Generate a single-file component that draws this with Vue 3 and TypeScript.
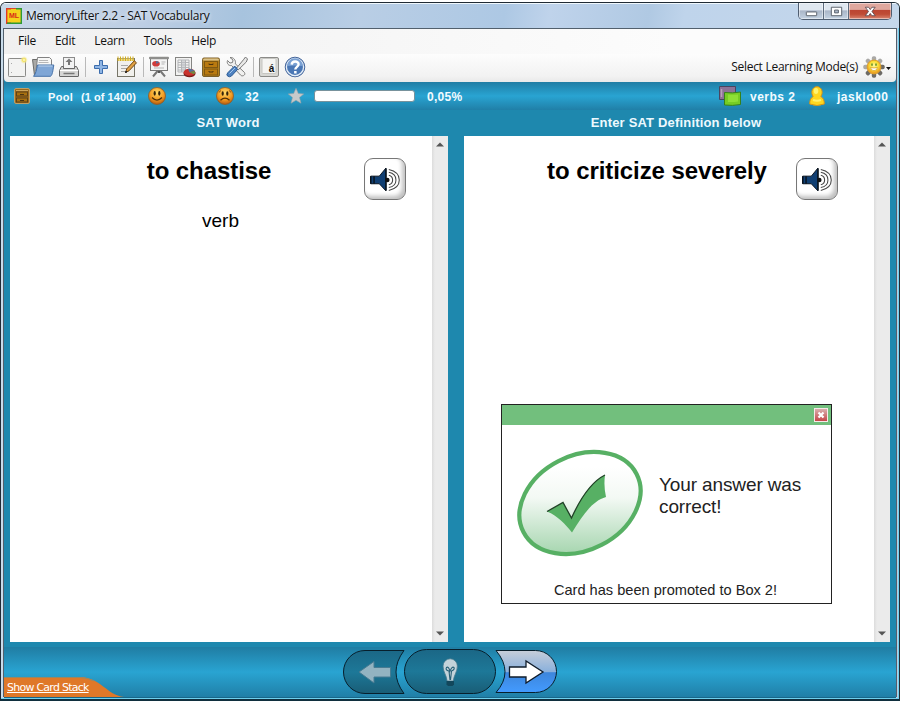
<script setup lang="ts">
interface Pane {
  id: string
  heading: string
  word: string
  kind: string
}

const menus: string[] = ['File', 'Edit', 'Learn', 'Tools', 'Help']

const panes: Pane[] = [
  { id: 'question', heading: 'SAT Word', word: 'to chastise', kind: 'verb' },
  { id: 'answer', heading: 'Enter SAT Definition below', word: 'to criticize severely', kind: '' },
]

const gearTeeth: number[] = [0, 45, 90, 135, 180, 225, 270, 315]
</script>

<template>
  <div class="desktop">
    <div class="window">
      <header class="titlebar">
        <svg class="app-icon" viewBox="0 0 16 16">
          <rect x=".5" y=".5" width="15" height="15" fill="#f5d11c" stroke="#d8452c" />
          <path d="M5 .7H.7V15.300H5" fill="none" stroke="#e23a24" stroke-width="1.400" />
          <path d="M10 .7h5.300V8M1 15.300h14.300V8" fill="none" stroke="#2f9a35" stroke-width="1.400" />
          <text x="8" y="10" text-anchor="middle" class="app-letters">ML</text>
        </svg>
        <span class="title">MemoryLifter 2.2 - SAT Vocabulary</span>
        <div class="controls">
          <span class="control min"><svg viewBox="0 0 26 17"><rect x="7.500" y="9.500" width="11" height="4" rx=".5" fill="#fff" stroke="#555d68" /></svg></span>
          <span class="control max"><svg viewBox="0 0 26 17"><path fill-rule="evenodd" d="M7.500 4.500h11v9h-11zM11 7.500h4v3h-4z" fill="#fff" stroke="#555d68" /></svg></span>
          <span class="control close"><svg viewBox="0 0 42 17"><path d="M16 4.500h3.500l1.800 2.500L23 4.500h3.500l-3.400 4.500 3.400 4.500H23l-1.700-2.400-1.800 2.400H16l3.400-4.500z" fill="#fff" stroke="#5a4a50" stroke-width=".9" /></svg></span>
        </div>
      </header>

      <div class="client">
        <nav class="menubar">
          <span v-for="m in menus" :key="m" class="menu">{{ m }}</span>
        </nav>

        <div class="toolbar">
          <span class="tool">
            <svg viewBox="0 0 26 26">
              <defs><radialGradient id="glow"><stop offset="0" stop-color="#fffbe0" /><stop offset=".4" stop-color="#f3e36a" /><stop offset="1" stop-color="#f7efb0" stop-opacity="0" /></radialGradient></defs>
              <rect x="4.500" y="4.500" width="17" height="18" rx=".8" fill="#f3f3f2" stroke="#8b8b89" />
              <path d="M7.500 9v1M7.500 18v1" stroke="#aaa" />
              <circle cx="20" cy="6" r="4" fill="url(#glow)" />
            </svg>
          </span>
          <span class="tool">
            <svg viewBox="0 0 26 26">
              <path d="M2.500 5.500h5l1 2v14h-4z" fill="#a8a8a6" stroke="#6c6c6a" />
              <path d="M7.500 3.500h12l2 2V17H6z" fill="#f7f7f6" stroke="#818181" />
              <path d="M9 6.500h9M8.500 8.500h10" stroke="#b7b7b7" />
              <path d="M7.500 11h16.300c-1 6-1.300 10-3.300 11.300H3.500C6 20 6.500 15 7.500 11z" fill="#7fa6d6" stroke="#4672aa" />
              <path d="M8.500 12h14" stroke="#bcd2ec" />
            </svg>
          </span>
          <span class="tool">
            <svg viewBox="0 0 26 26">
              <rect x="7.500" y="3.500" width="11" height="12" fill="#f3f3f3" stroke="#8b8b8b" />
              <path d="M13 4.500l3.500 3.500H14v3h-2V8H9.500z" fill="#777" />
              <path d="M5.500 12.500h2v2h11v-2h2l2 4v5.500q0 .5-.5.500H4q-.5 0-.5-.5v-5.500z" fill="#d6d6d5" stroke="#666" />
              <path d="M4 16.500h18" stroke="#fff" /><path d="M7.500 19.500h11" stroke="#777" stroke-width="1.500" />
            </svg>
          </span>
          <i class="divider"></i>
          <span class="tool">
            <svg viewBox="0 0 26 26"><path d="M11.500 6.500h3v5h5v3h-5v5h-3v-5h-5v-3h5z" fill="#8fb5e4" stroke="#3c6dad" /></svg>
          </span>
          <span class="tool">
            <svg viewBox="0 0 26 26">
              <rect x="3.500" y="4.500" width="17" height="18" fill="#f1f0ec" stroke="#777568" />
              <path d="M4 4.500h16v2.500H4z" fill="#f0dc82" />
              <path d="M4 2.500v4.500M6.500 2.500v4.500M9 2.500v4.500M11.500 2.500v4.500M14 2.500v4.500M16.500 2.500v4.500M19 2.500v4.500" stroke="#d0ac20" />
              <path d="M7 11.500h7M7 14.500h6M7 17.500h4" stroke="#a9a9a6" />
              <path d="M11.500 18.500l1.300-3.700 7.500-8 2.200 2-7.500 8z" fill="#e1a143" stroke="#6d4511" />
              <path d="M11.500 18.500l.5-1.500 1 1z" stroke="#222" />
            </svg>
          </span>
          <i class="divider"></i>
          <span class="tool">
            <svg viewBox="0 0 26 26">
              <path d="M12 16.500L7 22.500M14 16.500l5 6" stroke="#777" stroke-width="2" /><path d="M13 16v3" stroke="#555" stroke-width="2" />
              <rect x="4.500" y="4" width="17" height="12.500" fill="#f4f4f4" stroke="#777" />
              <rect x="3" y="2.800" width="20" height="2.400" rx="1" fill="#8e8e8c" />
              <ellipse cx="10" cy="9.700" rx="3.800" ry="2.800" fill="#cf3b3b" /><path d="M10 9.700V6.900a4 3 0 013.300 1.700z" fill="#536f9d" />
              <path d="M15.500 8h4M15.500 10h3M8 14h10" stroke="#b5b5b5" />
            </svg>
          </span>
          <span class="tool">
            <svg viewBox="0 0 26 26">
              <rect x="3.500" y="3.500" width="16" height="18" fill="#f2f2f1" stroke="#858583" />
              <path d="M6 6h11v12H6zM6 8.500h11M6 11h11M6 13.500h11M6 16h11M9.500 6v12M13.500 6v12" fill="none" stroke="#b3b5b8" />
              <path d="M10 6h3v12h-3z" fill="#bfc3c8" opacity=".6" />
              <ellipse cx="17.500" cy="19.500" rx="6" ry="3.800" fill="#7c1c1a" /><ellipse cx="17.500" cy="18.300" rx="5.800" ry="3.500" fill="#c9322d" />
              <path d="M17.500 18.300l-1.500-3.400q4-.4 6.500 1.800z" fill="#52749b" /><path d="M17.500 18.300l5-1.600q1.600 1.900-.6 3.500z" fill="#6f8b45" />
            </svg>
          </span>
          <span class="tool">
            <svg viewBox="0 0 26 26">
              <rect x="4.500" y="4" width="17" height="18.500" rx="1.500" fill="#b4811e" stroke="#7b5f2a" />
              <path d="M5 6.500q0-2 1.500-2h13q1.500 0 1.500 2z" fill="#d9c28c" />
              <rect x="6.500" y="7.500" width="13" height="6" fill="#b9790f" stroke="#805810" /><rect x="6.500" y="15" width="13" height="6" fill="#b9790f" stroke="#805810" />
              <path d="M11 9.500v1h4v-1M11 17v1h4v-1" fill="none" stroke="#4d3410" />
            </svg>
          </span>
          <span class="tool">
            <svg viewBox="0 0 26 26">
              <path d="M6 3.500l3 2.500-.5 2.500L6 9 3.500 6.500c-1 3 1 5.500 4 5l9 9.500c1.500 2 5.500.3 4-2.500L11.300 9.800C12.300 6.500 9.500 3 6 3.500z" fill="#f0f0ef" stroke="#7e7e7d" />
              <path d="M21.500 3l2 2-1.200 3-8.200 8-1.700-1.700 7-8.500z" fill="#e8e8e7" stroke="#777" />
              <path d="M4 18.500l6-6q2.300-.3 3.500 3l-6 6.500q-2 1.500-4 0-1.500-1.500.5-3.500z" fill="#4d81c0" stroke="#2d5c96" /><path d="M5.500 19.500l5.500-5.500" stroke="#a7c8ed" />
            </svg>
          </span>
          <i class="divider"></i>
          <span class="tool">
            <svg viewBox="0 0 26 26">
              <rect x="3.500" y="3.500" width="19" height="19" rx="1.500" fill="#d7d7d3" stroke="#8b8b88" />
              <rect x="6" y="4.500" width="14" height="15" rx="1" fill="#f5f5f3" stroke="#c6c6c2" />
              <text x="15.500" y="17.500" text-anchor="middle" class="key-letter">á</text>
            </svg>
          </span>
          <span class="tool">
            <svg viewBox="0 0 26 26">
              <circle cx="13" cy="13" r="9.800" fill="#4a77b5" stroke="#46669a" /><circle cx="13" cy="13" r="8.600" fill="none" stroke="#e4edf7" stroke-width="1.300" />
              <path d="M5.200 12a7.800 7.800 0 0115.600 0q-7-1-15.600 0z" fill="#7ba1d3" />
              <path d="M9.700 10.600c.1-4 6.900-4.100 6.900-.3 0 2.500-3.300 2.600-3.300 5.200" fill="none" stroke="#fff" stroke-width="2.400" /><rect x="12.100" y="17" width="2.500" height="2.500" fill="#fff" />
            </svg>
          </span>
          <span class="mode-label">Select Learning Mode(s)</span>
          <svg class="mode-icon" viewBox="0 0 22 22">
            <defs><radialGradient id="sun" cx=".5" cy=".4"><stop offset="0" stop-color="#fff8a4" /><stop offset=".6" stop-color="#fae034" /><stop offset="1" stop-color="#eda526" /></radialGradient></defs>
            <rect v-for="(a, i) in gearTeeth" :key="a" x="8.800" y=".3" width="4.400" height="6" rx="1.700" :transform="`rotate(${a} 11 11)`" :fill="i > 1 && i < 6 ? '#6d6a65' : '#aaa9a7'" />
            <circle cx="11" cy="11" r="6.900" fill="url(#sun)" stroke="#e0a028" />
            <path d="M9 7.500v2.300M13 7.500v2.300" stroke="#5e8d24" stroke-width="1.500" /><path d="M7.500 11.500q3.500 1 7 0-.5 3.200-3.500 3.200t-3.500-3.200z" fill="#fff" stroke="#d49a21" stroke-width=".7" />
          </svg>
          <svg class="drop" viewBox="0 0 5 3"><path d="M0 0h5L2.500 3z" fill="#111" /></svg>
        </div>

        <div class="status">
          <svg class="s16" viewBox="0 0 16 16">
            <rect x=".5" y=".5" width="15" height="15" rx="1.500" fill="#9c691b" stroke="#bfa067" /><path d="M2 2.500h12" stroke="#cfa55a" />
            <rect x="2.500" y="4" width="11" height="4" fill="#a9700f" stroke="#5e421a" /><rect x="2.500" y="10" width="11" height="4" fill="#a9700f" stroke="#5e421a" /><path d="M6 6.500h4M6 12.500h4" stroke="#4c3411" />
          </svg>
          <span class="small">Pool</span>
          <span class="small count">(1 of 1400)</span>
          <svg class="face" viewBox="0 0 18 18">
            <defs><radialGradient id="orange" cx=".5" cy=".3" r=".7"><stop offset="0" stop-color="#ffd968" /><stop offset=".6" stop-color="#f39b20" /><stop offset="1" stop-color="#b4590f" /></radialGradient></defs>
            <circle cx="9" cy="9" r="8.500" fill="url(#orange)" stroke="#8f5b24" stroke-width=".8" />
            <ellipse cx="6.700" cy="6.300" rx="1.100" ry="2.400" fill="#33230a" /><ellipse cx="11.300" cy="6.300" rx="1.100" ry="2.400" fill="#33230a" />
            <path d="M4 10.500q5 5.300 10 0" fill="none" stroke="#513008" stroke-width="1.200" />
          </svg>
          <span>3</span>
          <svg class="face" viewBox="0 0 18 18">
            <circle cx="9" cy="9" r="8.500" fill="url(#orange)" stroke="#8f5b24" stroke-width=".8" />
            <ellipse cx="6.700" cy="6.500" rx="1.100" ry="2.300" fill="#33230a" /><ellipse cx="11.300" cy="6.500" rx="1.100" ry="2.300" fill="#33230a" />
            <path d="M4.500 13.300q4.500-4.300 9 0" fill="none" stroke="#513008" stroke-width="1.200" />
            <path d="M2.800 5.500l2.200-2M15.200 5.500l-2.200-2" stroke="#7a450c" stroke-width=".9" />
          </svg>
          <span>32</span>
          <svg class="star" viewBox="0 0 16 16"><path d="M8 .3l2.300 5.200 5.400.4-4.200 3.500 1.500 5.800L8 12.200l-5 3 1.500-5.800L.3 5.900l5.400-.4z" fill="#c6cacb" stroke="#9aa3a7" stroke-width=".6" /></svg>
          <i class="progress"></i>
          <span>0,05%</span>
          <svg class="sets" viewBox="0 0 22 20">
            <path d="M.5.500h16v13H.5z" fill="#8d7296" stroke="#4a4560" /><path d="M2.500 3v8" stroke="#b7a0bb" stroke-width="1.500" />
            <path d="M5.500 6.500q8 1 16-.5v12.500q-8 1.500-16 .5z" fill="#76cc24" stroke="#36801c" /><path d="M9 8.500q5 .4 10 0v7q-5 .8-10 .5z" fill="#98e73d" opacity=".7" />
          </svg>
          <span class="wide">verbs 2</span>
          <svg class="user" viewBox="0 0 16 20">
            <path d="M.7 18c0-4 1-6 3.500-7.500C1.300 6.500 3.300.7 8 .7s6.700 5.800 3.800 9.800c2.500 1.500 3.500 3.500 3.500 7.500Q8 21 .7 18z" fill="#fed61f" stroke="#d59318" /><ellipse cx="7" cy="5" rx="2.300" ry="3" fill="#fff36f" /><path d="M4 14q4 1.500 8 0" stroke="#fff06c" fill="none" stroke-width="2" />
          </svg>
          <span class="wide">jasklo00</span>
        </div>

        <main class="panes">
          <section v-for="p in panes" :key="p.id" class="pane" :class="p.id">
            <h2>{{ p.heading }}</h2>
            <div class="card">
              <div class="content">
                <div class="entry">
                  <div class="words">
                    <strong>{{ p.word }}</strong>
                    <span v-if="p.kind">{{ p.kind }}</span>
                  </div>
                  <button class="speaker" type="button">
                    <svg viewBox="0 0 42 42">
                      <path d="M6 18h9l7-8.500v24L15 26H6z" fill="#103f73" stroke="#07111c" /><path d="M6 18v8M9.500 18v8M22 10v23" stroke="#07111c" stroke-width="1.500" />
                      <circle cx="23.500" cy="22" r="2.300" fill="#111" />
                      <path d="M25 17q4 1 4 5t-4 5M25 14q7.500 1.500 7.500 8t-7.500 8M25 11q11 2.500 11 11t-11 11" fill="none" stroke="#484848" stroke-width="1.100" />
                    </svg>
                  </button>
                </div>
                <div v-if="p.id === 'answer'" class="result">
                  <div class="result-bar">
                    <span class="dismiss"><svg viewBox="0 0 12 12"><path d="M3.500 3.500l5 5m0-5l-5 5" stroke="#fff" stroke-width="2.200" /></svg></span>
                  </div>
                  <div class="result-body">
                    <svg class="tick" viewBox="0 0 126 108">
                      <defs><linearGradient id="mint" x1="86.800" y1="7.800" x2="39.200" y2="100.200" gradientUnits="userSpaceOnUse"><stop offset=".15" stop-color="#fff" /><stop offset=".45" stop-color="#f3f9f4" /><stop offset="1" stop-color="#a5d5ae" /></linearGradient></defs>
                      <ellipse cx="63" cy="54" rx="63.600" ry="47.100" transform="rotate(-27.200 63 54)" fill="url(#mint)" stroke="#57b064" stroke-width="4.200" />
                      <path d="M30 62.500L46 53.500 54.500 69C64 48 74 33 88 26q-1.500 11 1 22C75 52 66 66 55 83.500 48 75 41 67 30 62.500z" fill="#57b064" />
                      <path d="M30 62.500L46 53.500 54.500 69C64 48 74 33 88 26" fill="none" stroke="#214227" stroke-width="1.300" />
                    </svg>
                    <p>Your answer was<br />correct!</p>
                  </div>
                  <div class="promoted">Card has been promoted to Box 2!</div>
                </div>
              </div>
              <div class="scroll">
                <svg viewBox="0 0 8 5"><path d="M0 4.500L4 .5l4 4z" fill="#555" /></svg>
                <svg viewBox="0 0 8 5"><path d="M0 .5h8l-4 4z" fill="#555" /></svg>
              </div>
            </div>
          </section>
        </main>

        <footer class="footer">
          <div class="stack-tab">
            <svg viewBox="0 0 120 20" preserveAspectRatio="none"><path d="M0 0H76C98 1 102 18 120 20H0z" fill="#df7828" /><path d="M0 .5H76q8 .5 14 3.500" fill="none" stroke="#9a8762" /></svg>
            <a>Show Card Stack</a>
          </div>
          <svg class="nav" viewBox="0 0 216 48">
            <defs>
              <linearGradient id="dim" x1="0" y1="0" x2="0" y2="1"><stop offset="0" stop-color="#1b6786" /><stop offset=".5" stop-color="#1d7898" /><stop offset="1" stop-color="#195d76" /></linearGradient>
              <linearGradient id="next" x1="0" y1="0" x2="0" y2="1"><stop offset="0" stop-color="#c7ced9" /><stop offset=".5" stop-color="#8ab0dc" /><stop offset=".53" stop-color="#3d86dc" /><stop offset="1" stop-color="#439bff" /></linearGradient>
            </defs>
            <path d="M23 2.500H62Q46 24 62 45.500H23a21.500 21.500 0 010-43z" fill="url(#dim)" stroke="#071f2c" />
            <rect x="62.500" y="1.500" width="91" height="44" rx="22" fill="url(#dim)" stroke="#071f2c" />
            <path d="M154 2.500h39.500a21 21 0 010 42H154Q172 24 154 2.500z" fill="url(#next)" stroke="#071f2c" />
            <path d="M17 24L32 13.500v6h16.500v9.500H32v6z" fill="#93b3c1" stroke="#477b92" />
            <path d="M167.500 19h16.500v-6L201 24l-17 11v-6h-16.500z" fill="#fff" stroke="#101c2a" stroke-width="1.300" />
            <path d="M105 33c0-5-4-9-4-15a7.200 7.200 0 0114.400 0c0 6-4 10-4 15z" fill="#c4d3da" stroke="#42798d" stroke-width=".8" />
            <path d="M108 32l-1-9q-4-1-2.500-3.500 2-1.500 3.500 3.500 2-5 4-3.500 1 2-2.500 3.500l-1 9" fill="none" stroke="#275f75" stroke-width="1.100" />
            <path d="M104.500 33h7.500v3.500l-1.500 1.500h-4.500l-1.500-1.500z" fill="#12475b" />
          </svg>
        </footer>
      </div>
    </div>
  </div>
</template>

<style>
body { margin: 0; background: #fff; }
</style>

<style scoped>
* { box-sizing: border-box; }
svg { display: block; }
.desktop { width: 900px; height: 701px; padding-top: 2px; overflow: hidden; background: #fff; font-family: "Liberation Sans", Arial, sans-serif; }
.window { width: 900px; height: 699px; border: 1px solid #202b35; border-width: 1px 1px 2px 1px; border-bottom-color: #102f3e; border-radius: 6px 6px 0 0; background: linear-gradient(90deg, #c9dceb, #b9cfe5); padding: 0 2px 2px; overflow: hidden; box-shadow: inset -1px -1px 0 #6fd0ee; }
.titlebar { height: 25px; margin: 0 -2px; padding: 0 7px 0 5px; display: flex; align-items: flex-start; background: linear-gradient(100deg, #c7d7e7 0%, #bdcee4 16%, #a7c3de 27%, #b9cee5 40%, #adc8e4 56%, #bfd3eb 61%, #b0c9e3 72%, #bfd4eb 76%, #c5d7eb 100%); border-top: 1px solid #eff7fc; }
.app-icon { width: 16px; height: 16px; margin-top: 4px; }
.app-letters { font: bold 7px "Liberation Sans", sans-serif; fill: #d92819; }
.title { margin: 3px 0 0 4px; font: 12px/17px "Open Sans", sans-serif; letter-spacing: -.26px; color: #111; text-shadow: 0 0 4px #fff; white-space: nowrap; }
.controls { margin-left: auto; height: 17px; margin-top: -1px; display: flex; border: 1px solid #4f5d70; border-top: 0; border-radius: 0 0 5px 5px; overflow: hidden; }
.control { width: 25px; height: 16px; border-right: 1px solid #5d6b7d; background: linear-gradient(#dfe7f0 0 45%, #a9b5c7 48%, #c4d2e2); box-shadow: inset 0 0 0 1px #ffffff75; }
.control svg { width: 25px; height: 16px; }
.control.close { width: 42px; border: 0; background: linear-gradient(#dfa79d 0 40%, #bc4532 46%, #bf4c36 70%, #d98570); }
.control.close svg { width: 42px; }
.client { height: 669px; border: 1px solid #52606d; border-bottom: 0; background: #1e88ae; display: flex; flex-direction: column; }
.menubar { height: 25px; flex: none; display: flex; background: linear-gradient(90deg, #f0f0f0, #fcfcfc 75%); padding-left: 14px; gap: 19px; }
.menu { font: 12px/23px "Open Sans", sans-serif; letter-spacing: -.27px; color: #111; }
.toolbar { height: 28px; flex: none; display: flex; align-items: flex-start; background: linear-gradient(#fdfdfd, #f2f2f2 80%, #e9e9e9); border-radius: 0 0 4px 4px; }
.tool { width: 26px; height: 26px; flex: none; }
.tool svg { width: 26px; height: 26px; }
.divider { width: 1px; height: 20px; flex: none; margin: 3px 2px 0 3px; background: #b9b9b9; }
.key-letter { font: bold 10px "Liberation Sans", sans-serif; fill: #111; }
.mode-label { margin-left: auto; font: 12px/26px "Open Sans", sans-serif; letter-spacing: -.27px; color: #111; white-space: nowrap; }
.mode-icon { width: 22px; height: 22px; margin: 2px 0 0 5px; }
.drop { width: 5px; height: 3px; margin: 13px 5px 0 1px; }
.status { height: 28px; flex: none; display: grid; grid-template-columns: 34px 33px 67px 29px 39px 29px 43px 26px 113px 292px 31px 59px 28px 1fr; padding-left: 10px; align-items: center; background: linear-gradient(#207da4, #29a4d2 50%, #207fa7); color: #f3fbff; font: bold 12px/28px "Liberation Sans", sans-serif; white-space: nowrap; letter-spacing: .3px; }
.status span { padding-top: 1px; height: 28px; }
.status .small { font-size: 11px; }
.status .count { letter-spacing: .05px; }
.status .wide { letter-spacing: .5px; }
.s16 { width: 16px; height: 16px; }
.face { width: 18px; height: 18px; }
.star { width: 16px; height: 16px; }
.progress { width: 101px; height: 12px; background: #fff; border: 1px solid #78929c; border-radius: 3px; }
.sets { width: 22px; height: 20px; }
.user { width: 16px; height: 20px; }
.panes { flex: none; display: flex; gap: 16px; padding: 0 6px; }
.pane { width: 438px; }
.pane.answer { width: 426px; }
h2 { margin: 0; height: 26px; padding-right: 2px; font: bold 13px/25px "Liberation Sans", sans-serif; color: #edf9fe; text-align: center; letter-spacing: .18px; }
.card { height: 506px; display: flex; background: #fff; }
.content { flex: 1; display: flex; flex-direction: column; }
.entry { display: flex; padding: 21px 26px 0 44px; }
.answer .entry { padding: 21px 36px 0 54px; }
.words { flex: 1; display: flex; flex-direction: column; align-items: center; gap: 25px; color: #000; }
.words strong { font-size: 24px; line-height: 28px; letter-spacing: -.08px; white-space: nowrap; }
.words span { font-size: 19px; line-height: 22px; padding-left: 23px; }
.speaker { width: 42px; height: 42px; flex: none; margin-top: 1px; padding: 0; border: 1px solid #777; border-radius: 9px; background: #fff; box-shadow: inset -3px -3px 4px #c0c0c0; }
.speaker svg { width: 40px; height: 40px; margin-top: -1px; }
.scroll { width: 16px; flex: none; background: linear-gradient(90deg, #dcdcdc, #ebebeb 3px); display: flex; flex-direction: column; justify-content: space-between; align-items: center; padding: 6px 1px 6px 0; }
.scroll svg { width: 8px; height: 5px; }
.result { width: 331px; height: 200px; margin: auto 0 38px 37px; border: 1px solid #222; background: #fff; color: #222; }
.result-bar { height: 20px; background: #72bf7d; display: flex; justify-content: flex-end; padding: 3px; }
.dismiss { width: 14px; height: 14px; border: 1px solid #f7e9e8; background: linear-gradient(#d9afae, #c54749); }
.dismiss svg { width: 12px; height: 12px; }
.result-body { height: 135px; display: flex; align-items: center; padding: 4px 0 0 15px; }
.tick { width: 126px; height: 108px; margin-top: 16px; overflow: visible; }
.result-body p { margin: 3px 0 0 16px; font-size: 19px; line-height: 22px; letter-spacing: -.12px; white-space: nowrap; }
.promoted { font-size: 14.600px; line-height: 18px; margin: 21px 2px 0 0; text-align: center; white-space: nowrap; }
.footer { height: 51px; margin-top: 5px; flex: none; background: linear-gradient(#207da3, #29a4d2 50%, #207fa7); border-bottom: 1px solid #186789; display: flex; align-items: flex-end; }
.nav { width: 216px; height: 48px; margin: 0 0 1px 218px; flex: none; }
.stack-tab { width: 120px; height: 20px; flex: none; display: grid; }
.stack-tab svg { width: 120px; height: 20px; grid-area: 1 / 1; }
.stack-tab a { grid-area: 1 / 1; padding-left: 3px; font: 11px/22px "DejaVu Sans", sans-serif; letter-spacing: -.75px; color: #fff; text-decoration: underline; white-space: nowrap; }
</style>
